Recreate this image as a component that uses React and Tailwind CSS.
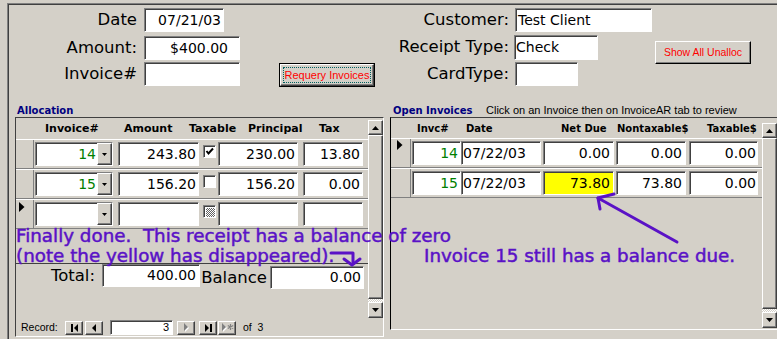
import React from "react";

const FIELD_NB =
  "box-border border border-t-[#808080] border-l-[#808080] border-b-white border-r-white shadow-[inset_1px_1px_0_#404040]";
const FIELD = `${FIELD_NB} bg-white`;
const RAISED =
  "box-border bg-[#d4d0c8] border border-t-white border-l-white border-b-[#404040] border-r-[#404040] shadow-[inset_-1px_-1px_0_#808080]";
const DV = "font-['DejaVu_Sans',sans-serif]";

function DownTri() {
  return (
    <svg width="7" height="4" viewBox="0 0 7 4">
      <polygon points="0,0 7,0 3.5,4" fill="#000" />
    </svg>
  );
}
function UpTri() {
  return (
    <svg width="7" height="4" viewBox="0 0 7 4">
      <polygon points="3.5,0 7,4 0,4" fill="#000" />
    </svg>
  );
}
function SmallDown() {
  return (
    <svg width="5" height="3" viewBox="0 0 5 3">
      <polygon points="0,0 5,0 2.5,3" fill="#000" />
    </svg>
  );
}
function SelTri() {
  return (
    <svg width="6" height="10" viewBox="0 0 6 10">
      <polygon points="0,0 5.5,5 0,10" fill="#000" />
    </svg>
  );
}

function Combo({ value }) {
  return (
    <div className={`${FIELD} flex h-[24px] w-[78px] items-stretch`}>
      <div className={`flex flex-1 items-center justify-end pr-[1px] text-[14px] text-[#008000] ${DV}`}>{value}</div>
      <div className={`${RAISED} flex w-[15px] items-center justify-center`}>
        <SmallDown />
      </div>
    </div>
  );
}

function Check({ state }) {
  if (state === "mixed") {
    return (
      <div className="mt-[5px] box-border h-[13px] w-[13px] self-start border border-t-[#808080] border-l-[#808080] border-b-white border-r-white bg-white p-[1px] shadow-[inset_1px_1px_0_#404040]">
        <div className="ml-[1px] mt-[1px] h-[9px] w-[9px] bg-[repeating-conic-gradient(#606060_0%_25%,#ffffff_0%_50%)] bg-[length:2px_2px]" />
      </div>
    );
  }
  return (
    <div className="mt-[5px] box-border flex h-[13px] w-[13px] items-center justify-center self-start border border-t-[#808080] border-l-[#808080] border-b-white border-r-white bg-white shadow-[inset_1px_1px_0_#404040]">
      {state === "on" && (
        <svg width="9" height="9" viewBox="0 0 9 9">
          <polyline points="1.5,4 3.5,6.5 8,1.5" fill="none" stroke="#000" strokeWidth="2" />
        </svg>
      )}
    </div>
  );
}

function AllocRow({ sel, inv, amt, chk, prin, tax }) {
  return (
    <div className="flex h-[30px] items-center border-b border-t border-b-[#808080] border-t-white">
      <div className="relative h-full w-[18px] border-r border-r-[#808080]">
        {sel && (
          <div className="ml-[3px] mt-[2px]">
            <SelTri />
          </div>
        )}
      </div>
      <div className="ml-[1px]">
        <Combo value={inv} />
      </div>
      <div className={`${FIELD} ml-[5px] flex h-[24px] w-[81px] items-center justify-end pr-[2px] text-[14px] ${DV}`}>{amt}</div>
      <div className="ml-[4px] flex h-full">
        <Check state={chk} />
      </div>
      <div className={`${FIELD} ml-[2px] flex h-[24px] w-[80px] items-center justify-end pr-[2px] text-[14px] ${DV}`}>{prin}</div>
      <div className={`${FIELD} ml-[5px] flex h-[24px] w-[60px] items-center justify-end pr-[2px] text-[14px] ${DV}`}>{tax}</div>
    </div>
  );
}

function OpenRow({ sel, inv, date, net, non, taxable, yellow }) {
  return (
    <div className="flex h-[30px] items-center border-b border-t border-b-[#808080] border-t-white">
      <div className="h-full w-[20px] border-r border-r-[#808080]">
        {sel && (
          <div className="ml-[6px] mt-[1px]">
            <SelTri />
          </div>
        )}
      </div>
      <div className={`${FIELD} ml-[1px] flex h-[24px] w-[49px] items-center justify-end pr-[2px] text-[14px] text-[#008000] ${DV}`}>{inv}</div>
      <div className={`${FIELD} flex h-[24px] w-[80px] items-center justify-start pl-[1px] text-[14px] ${DV}`}>{date}</div>
      <div
        className={`${FIELD_NB} ml-[2px] flex h-[24px] w-[71px] items-center justify-end pr-[3px] text-[14px] ${DV} ${yellow ? "bg-[#ffff00]" : "bg-white"}`}
      >
        {net}
      </div>
      <div className={`${FIELD} ml-[2px] flex h-[24px] w-[70px] items-center justify-end pr-[3px] text-[14px] ${DV}`}>{non}</div>
      <div className={`${FIELD} ml-[3px] flex h-[24px] w-[69px] items-center justify-end pr-[1px] text-[14px] ${DV}`}>{taxable}</div>
    </div>
  );
}

function NavGlyph({ kind }) {
  if (kind === "first")
    return (
      <svg width="9" height="8" viewBox="0 0 9 8">
        <rect x="1" y="0" width="2" height="8" fill="#000" />
        <polygon points="8,0 4,4 8,8" fill="#000" />
      </svg>
    );
  if (kind === "prev")
    return (
      <svg width="6" height="8" viewBox="0 0 6 8">
        <polygon points="5,0 1,4 5,8" fill="#000" />
      </svg>
    );
  if (kind === "next")
    return (
      <svg width="7" height="9" viewBox="0 0 7 9">
        <polygon points="2,1 6,5 2,9" fill="#ffffff" />
        <polygon points="1,0 5,4 1,8" fill="#808080" />
      </svg>
    );
  if (kind === "last")
    return (
      <svg width="9" height="8" viewBox="0 0 9 8">
        <polygon points="1,0 5,4 1,8" fill="#000" />
        <rect x="6" y="0" width="2" height="8" fill="#000" />
      </svg>
    );
  return (
    <svg width="13" height="9" viewBox="0 0 13 9">
      <polygon points="2,1 6,5 2,9" fill="#ffffff" />
      <polygon points="1,0 5,4 1,8" fill="#808080" />
      <path d="M9.5 1 V7 M6.8 2.5 L12.2 5.5 M6.8 5.5 L12.2 2.5" stroke="#808080" strokeWidth="1.2" />
    </svg>
  );
}

function NavBtn({ kind, className }) {
  return (
    <div className={`${RAISED} flex h-[14px] w-[18px] items-center justify-center ${className || ""}`}>
      <NavGlyph kind={kind} />
    </div>
  );
}

export default function App() {
  return (
    <div className="relative h-[339px] w-[777px] overflow-hidden bg-[#d4d0c8] font-['Liberation_Sans',Arial,sans-serif] text-black">
      <div className="ml-[7px] mt-[3px] h-[336px] border-l border-t border-[#808080] shadow-[inset_1px_1px_0_#404040]">
        {/* Top form section */}
        <div className="flex h-[98px] items-start">
          <div className="flex shrink-0 flex-col">
            <div className="mt-[4px] flex h-[24px] items-center">
              <span className={`w-[129px] text-right text-[16.5px] leading-none ${DV}`}>Date</span>
              <div className={`${FIELD} ml-[7px] flex h-[24px] w-[80px] items-center justify-end pr-[2px] text-[14px] ${DV}`}>07/21/03</div>
            </div>
            <div className="mt-[4px] flex h-[24px] items-center">
              <span className={`w-[129px] text-right text-[16.5px] leading-none ${DV}`}>Amount:</span>
              <div className={`${FIELD} ml-[7px] flex h-[24px] w-[96px] items-center justify-end pr-[11px] text-[14px] ${DV}`}>$400.00</div>
            </div>
            <div className="mt-[2px] flex h-[24px] items-center">
              <span className={`w-[129px] text-right text-[16.5px] leading-none ${DV}`}>Invoice#</span>
              <div className={`${FIELD} ml-[7px] h-[24px] w-[96px]`} />
            </div>
          </div>

          <div className="ml-[39px] mt-[59px] box-border h-[24px] w-[96px] shrink-0 border border-black">
            <div className={`${RAISED} flex h-full w-full items-center justify-center p-[2px]`}>
              <div className="flex h-full w-full items-center justify-center border border-dotted border-[#006060] text-[11px] leading-none text-[#ff0000]">
                Requery Invoices
              </div>
            </div>
          </div>

          <div className="ml-[5px] flex shrink-0 flex-col">
            <div className="mt-[4px] flex h-[24px] items-center">
              <span className={`w-[129px] text-right text-[16.5px] leading-none ${DV}`}>Customer:</span>
              <div className={`${FIELD} ml-[6px] flex h-[24px] w-[137px] items-center pl-[2px] text-[14px] ${DV}`}>Test Client</div>
            </div>
            <div className="mt-[3px] flex h-[24px] items-center">
              <span className={`w-[129px] text-right text-[16.5px] leading-none ${DV}`}>Receipt Type:</span>
              <div className={`${FIELD} ml-[5px] flex h-[25px] w-[84px] items-center pl-[1px] text-[14px] ${DV}`}>Check</div>
            </div>
            <div className="mt-[3px] flex h-[24px] items-center">
              <span className={`w-[129px] text-right text-[16.5px] leading-none ${DV}`}>CardType:</span>
              <div className={`${FIELD} ml-[6px] h-[24px] w-[63px]`} />
            </div>
          </div>

          <div
            className={`${RAISED} ml-[3px] mt-[37px] flex h-[23px] w-[96px] shrink-0 items-center justify-center border-b-black border-r-black text-[10.5px] leading-none text-[#ff0000]`}
          >
            Show All Unalloc
          </div>
        </div>

        {/* Subforms */}
        <div className="flex items-start">
          {/* Allocation */}
          <div className="ml-[7px] flex shrink-0 flex-col">
            <div className={`ml-[2px] h-[15px] text-[10px] font-bold leading-[17px] text-[#000080] ${DV}`}>Allocation</div>
            <div className="box-border flex h-[220px] w-[369px] flex-col border border-b-white border-l-[#404040] border-r-white border-t-[#404040]">
              <div className="flex h-[201px]">
                <div className="flex w-[352px] flex-col">
                  <div className={`flex h-[21px] text-[11px] font-bold leading-[21px] ${DV}`}>
                    <span className="w-[29px]" />
                    <span className="w-[79px]">Invoice#</span>
                    <span className="w-[65px]">Amount</span>
                    <span className="w-[59px]">Taxable</span>
                    <span className="w-[71px]">Principal</span>
                    <span>Tax</span>
                  </div>
                  <AllocRow inv="14" amt="243.80" chk="on" prin="230.00" tax="13.80" />
                  <AllocRow inv="15" amt="156.20" chk="off" prin="156.20" tax="0.00" />
                  <AllocRow sel inv="" amt="" chk="mixed" prin="" tax="" />
                  <div className="h-[34px]" />
                  <div className="flex h-[55px] items-start border-t border-t-[#404040]">
                    <span className={`mt-[4px] w-[79px] text-right text-[16.5px] leading-none ${DV}`}>Total:</span>
                    <div className={`${FIELD} ml-[7px] flex h-[23px] w-[98px] items-center justify-end pr-[3px] text-[14px] ${DV}`}>400.00</div>
                    <span className={`mt-[6px] w-[67px] text-right text-[16.5px] leading-none ${DV}`}>Balance</span>
                    <div className={`${FIELD} ml-[3px] mt-[2px] flex h-[23px] w-[94px] items-center justify-end pr-[2px] text-[14px] ${DV}`}>0.00</div>
                  </div>
                </div>
                {/* scrollbar */}
                <div className="flex w-[15px] flex-col pb-[1px] pt-[2px]">
                  <div className={`${RAISED} flex h-[15px] items-center justify-center`}>
                    <UpTri />
                  </div>
                  <div className={`${RAISED} flex-1`} />
                  <div className="h-[3px] bg-[repeating-conic-gradient(#ffffff_0%_25%,#d4d0c8_0%_50%)] bg-[length:2px_2px]" />
                  <div className={`${RAISED} flex h-[16px] items-center justify-center`}>
                    <DownTri />
                  </div>
                </div>
              </div>
              {/* navigation */}
              <div className="flex h-[17px] items-center text-[10.5px] leading-none">
                <span className="ml-[5px] w-[44px]">Record:</span>
                <NavBtn kind="first" />
                <NavBtn kind="prev" className="ml-[2px]" />
                <div className={`${FIELD} ml-[7px] flex h-[15px] w-[63px] items-center justify-end pr-[3px] text-[11px]`}>3</div>
                <NavBtn kind="next" className="ml-[4px]" />
                <NavBtn kind="last" className="ml-[4px]" />
                <NavBtn kind="new" className="ml-[1px]" />
                <span className="ml-[7px]">of&nbsp;&nbsp;3</span>
              </div>
            </div>
          </div>

          {/* Open Invoices */}
          <div className="ml-[6px] flex shrink-0 flex-col">
            <div className="flex h-[15px] items-start">
              <span className={`ml-[3px] w-[93px] text-[10px] font-bold leading-[17px] text-[#000080] ${DV}`}>Open Invoices</span>
              <span className="text-[11px] leading-[17px]">Click on an Invoice then on InvoiceAR tab to review</span>
            </div>
            <div className="box-border flex h-[213px] w-[400px] border border-b-white border-l-[#000000] border-r-white border-t-[#404040]">
              <div className="flex w-[371px] flex-col">
                <div className={`flex h-[20px] text-[10px] font-bold leading-[22px] ${DV}`}>
                  <span className="w-[26px]" />
                  <span className="w-[49px]">Invc#</span>
                  <span className="w-[95px]">Date</span>
                  <span className="w-[56px]">Net Due</span>
                  <span className="w-[90px]">Nontaxable$</span>
                  <span>Taxable$</span>
                </div>
                <OpenRow sel inv="14" date="07/22/03" net="0.00" non="0.00" taxable="0.00" />
                <OpenRow inv="15" date="07/22/03" net="73.80" non="73.80" taxable="0.00" yellow />
              </div>
              <div className="flex w-[15px] flex-col pb-[1px] pt-[5px]">
                <div className={`${RAISED} flex h-[15px] items-center justify-center`}>
                  <UpTri />
                </div>
                <div className={`${RAISED} flex-1`} />
                <div className="h-[3px] bg-[repeating-conic-gradient(#ffffff_0%_25%,#d4d0c8_0%_50%)] bg-[length:2px_2px]" />
                <div className={`${RAISED} flex h-[16px] items-center justify-center`}>
                  <DownTri />
                </div>
              </div>
            </div>
          </div>
        </div>
      </div>

      {/* Annotations overlay */}
      <div
        className={`pointer-events-none absolute left-[16px] top-[226px] whitespace-pre text-[18.3px] leading-[20px] text-[#5a12c6] [-webkit-text-stroke:0.5px_#5a12c6] ${DV}`}
      >
        {"Finally done.  This receipt has a balance of zero\n(note the yellow has disappeared)."}
      </div>
      <div
        className={`pointer-events-none absolute left-[424px] top-[246px] whitespace-pre text-[18.3px] leading-[20px] text-[#5a12c6] [-webkit-text-stroke:0.5px_#5a12c6] ${DV}`}
      >
        Invoice 15 still has a balance due.
      </div>
      <svg className="pointer-events-none absolute left-0 top-0" width="777" height="339" viewBox="0 0 777 339">
        <g stroke="#5a12c6" strokeWidth="3" fill="none" strokeLinecap="round" strokeLinejoin="round">
          <path d="M331 253 H353 V263" />
          <path d="M344 259 L352 265 L360 259" />
          <path d="M677 242 L598 198" />
          <path d="M614 194 L598 198 L600 209" />
        </g>
      </svg>
    </div>
  );
}
